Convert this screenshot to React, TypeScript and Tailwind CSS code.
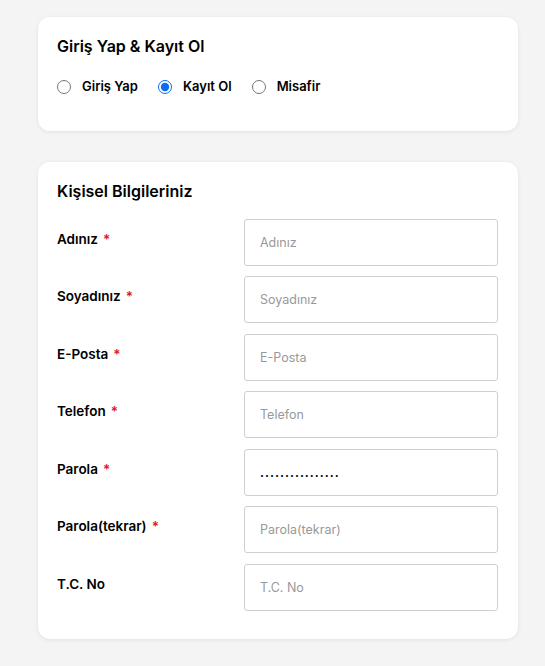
import React, { useState } from 'react';

const fields = [
  { label: 'Adınız', placeholder: 'Adınız', required: true },
  { label: 'Soyadınız', placeholder: 'Soyadınız', required: true },
  { label: 'E-Posta', placeholder: 'E-Posta', required: true },
  { label: 'Telefon', placeholder: 'Telefon', required: true },
  { label: 'Parola', placeholder: 'Parola', required: true, value: '................' },
  { label: 'Parola(tekrar)', placeholder: 'Parola(tekrar)', required: true },
  { label: 'T.C. No', placeholder: 'T.C. No', required: false },
];

const modes = ['Giriş Yap', 'Kayıt Ol', 'Misafir'];

export default function App() {
  const [mode, setMode] = useState('Kayıt Ol');

  return (
    <div
      className="min-h-[666px] bg-[#f4f4f4] pl-[38px] pt-[17px] pb-6 text-black"
      style={{ fontFamily: 'Inter, "Noto Sans", sans-serif' }}
    >
      <div className="w-[480px] rounded-xl bg-white px-[19px] pt-[19px] pb-[34px] shadow-[0_1px_4px_rgba(0,0,0,0.08)]">
        <h2 className="text-[16px] font-semibold leading-[20px]">Giriş Yap &amp; Kayıt Ol</h2>
        <div className="mt-[21px] flex items-center gap-[20px]">
          {modes.map((m) => (
            <label key={m} className="flex cursor-pointer items-center gap-[11px] text-[13px] font-semibold">
              <input
                type="radio"
                name="mode"
                checked={mode === m}
                onChange={() => setMode(m)}
                className="m-0 h-[14px] w-[14px] accent-[#0b6cf5]"
              />
              {m}
            </label>
          ))}
        </div>
      </div>

      <div className="mt-[31px] w-[480px] rounded-xl bg-white px-[19px] pt-[19px] pb-[28px] shadow-[0_1px_4px_rgba(0,0,0,0.08)]">
        <h2 className="text-[16px] font-semibold leading-[20px]">Kişisel Bilgileriniz</h2>
        <div className="mt-[18px] flex flex-col gap-[10.5px]">
          {fields.map((f) => (
            <div key={f.label} className="flex items-start">
              <div className="w-[187px] shrink-0 pt-[12px] text-[13.5px] font-semibold leading-[16px]">
                {f.label}
                {f.required && <span className="ml-[5px] text-[#e0102e]">*</span>}
              </div>
              <input
                type="text"
                placeholder={f.placeholder}
                defaultValue={f.value}
                className="h-[47px] w-[254px] rounded-[3px] border border-[#cfcfcf] bg-white px-[15px] text-[12.5px] font-semibold tracking-[1px] text-black placeholder:font-normal placeholder:tracking-normal placeholder:text-[#999] outline-none"
              />
            </div>
          ))}
        </div>
      </div>
    </div>
  );
}
